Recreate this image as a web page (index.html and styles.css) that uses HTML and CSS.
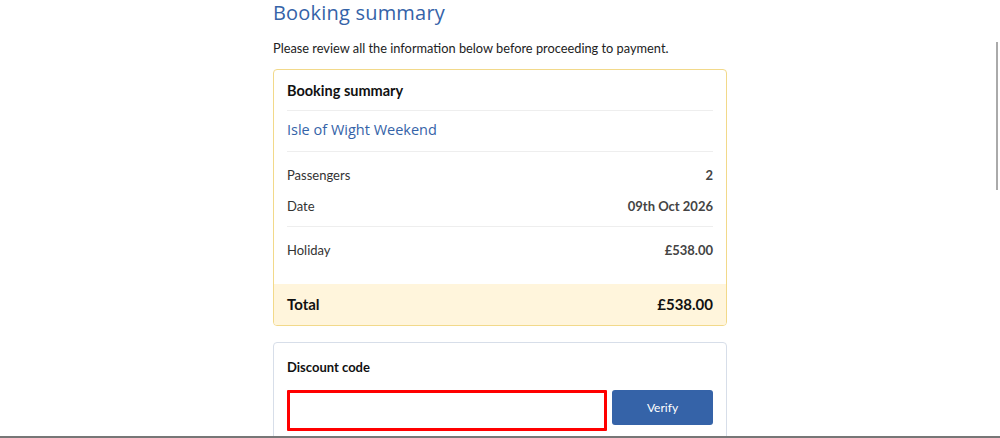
FILE: index.html
```html
<!DOCTYPE html>
<html lang="en">
<head>
    <meta charset="UTF-8">
    <meta name="viewport" content="width=device-width, initial-scale=1.0">
    <title>Booking summary</title>
    <link rel="stylesheet" href="styles.css">
</head>
<body>
    <div class="container">
        <h1>Booking summary</h1>
        <p class="intro">Please review all the information below before proceeding to payment.</p>

        <div class="summary">
            <h3>Booking summary</h3>
            <div class="holiday-name">Isle of Wight Weekend</div>
            <div class="details">
                <div class="row"><span>Passengers</span><strong>2</strong></div>
                <div class="row"><span>Date</span><strong>09th Oct 2026</strong></div>
            </div>
            <div class="prices">
                <div class="row"><span>Holiday</span><strong>£538.00</strong></div>
            </div>
            <div class="total"><span>Total</span><span>£538.00</span></div>
        </div>

        <div class="discount">
            <label for="code">Discount code</label>
            <div class="discount-form">
                <input type="text" id="code" class="code-input">
                <button class="btn">Verify</button>
            </div>
        </div>
    </div>

    <div class="scroll-thumb"></div>
    <div class="bottom-edge"></div>
</body>
</html>
```

FILE: styles.css
```css
body {
    font-family: Lato, 'Noto Sans', sans-serif;
    margin: 0;
    padding: 0;
    background-color: #fff;
    color: #222;
    height: 438px;
    overflow: hidden;
}
.container {
    width: 454px;
    margin: 0 auto;
    padding-top: 1px;
}
h1 {
    font-family: 'Open Sans', sans-serif;
    font-weight: 400;
    font-size: 20px;
    color: #3563a8;
    margin: 0;
    line-height: 24px;
    letter-spacing: 0.2px;
}
.intro {
    font-size: 12.8px;
    margin: 14px 0 12px;
    line-height: 18px;
    color: #222;
}
.summary {
    border: 1px solid #f2d98a;
    border-radius: 4px;
    overflow: hidden;
}
.summary h3 {
    font-size: 14.5px;
    font-weight: 700;
    margin: 0 13px;
    padding: 12px 0 10px;
    line-height: 18px;
    color: #111;
    border-bottom: 1px solid #eeeeee;
}
.holiday-name {
    font-family: 'Open Sans', sans-serif;
    font-size: 14.5px;
    color: #3563a8;
    margin: 0 13px;
    padding: 9px 0 11px;
    line-height: 20px;
    border-bottom: 1px solid #eeeeee;
}
.details {
    margin: 0 13px;
    padding: 14px 0 6px;
    border-bottom: 1px solid #eeeeee;
}
.row {
    display: flex;
    justify-content: space-between;
    font-size: 13px;
    line-height: 18px;
    margin-bottom: 13px;
    color: #333;
}
.details .row:last-child {
    margin-bottom: 5px;
}
.row strong {
    color: #444;
    font-weight: 700;
}
.prices {
    margin: 0 13px;
    padding: 14px 0 25px;
}
.prices .row {
    margin-bottom: 0;
}
.total {
    display: flex;
    justify-content: space-between;
    background-color: #fff5dc;
    padding: 10px 13px 11px;
    font-size: 15px;
    font-weight: 700;
    line-height: 20px;
    color: #111;
}
.discount {
    margin-top: 16px;
    border: 1px solid #d7dee9;
    border-radius: 4px;
    padding: 15px 13px 14px;
}
.discount label {
    display: block;
    font-size: 13px;
    font-weight: 700;
    line-height: 18px;
    color: #111;
    margin-bottom: 14px;
}
.discount-form {
    display: flex;
    gap: 5px;
}
.code-input {
    width: 320px;
    height: 41px;
    box-sizing: border-box;
    border: 3px solid #f00;
    border-radius: 1px;
    outline: none;
    padding: 0 10px;
}
.btn {
    flex: 1;
    height: 35px;
    background-color: #3563a8;
    color: white;
    border: none;
    border-radius: 3px;
    font-family: Lato, sans-serif;
    font-size: 12px;
    cursor: pointer;
}
.scroll-thumb {
    position: fixed;
    right: 2px;
    top: 42px;
    width: 2px;
    height: 148px;
    background-color: #aaaaaa;
}
.bottom-edge {
    position: fixed;
    left: 0;
    right: 0;
    bottom: 0;
    height: 2px;
    background-color: #777;
}
```
